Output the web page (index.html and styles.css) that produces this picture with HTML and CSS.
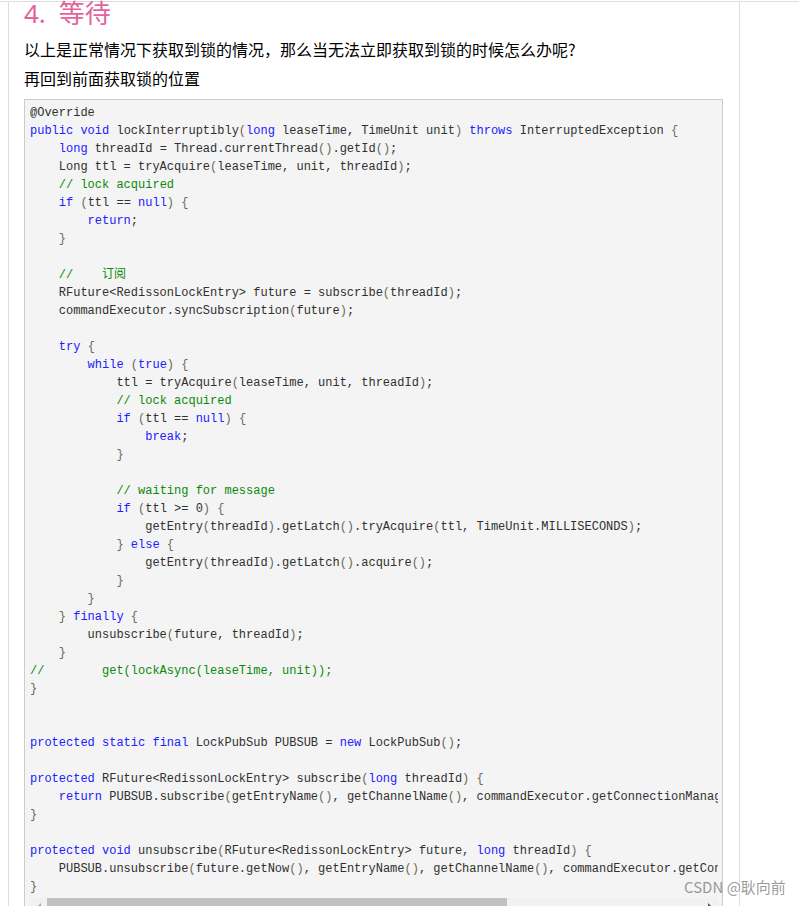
FILE: index.html
```html
<!DOCTYPE html>
<html>
<head>
    <title>4. 等待</title>
    <link rel="stylesheet" href="styles.css">
</head>
<body>
    <div class="page">
        <div class="article">
            <h2 class="title"><span class="title-num">4.</span>等待</h2>
            <p class="first">以上是正常情况下获取到锁的情况，那么当无法立即获取到锁的时候怎么办呢?</p>
            <p>再回到前面获取锁的位置</p>
            <div class="code-box">
<pre class="code"><span>@Override</span>
<span class="k">public</span> <span class="k">void</span> lockInterruptibly<span class="p">(</span><span class="k">long</span> leaseTime, TimeUnit unit<span class="p">)</span> <span class="k">throws</span> InterruptedException <span class="p">{</span>
    <span class="k">long</span> threadId = Thread.currentThread<span class="p">()</span>.getId<span class="p">()</span>;
    Long ttl = tryAcquire<span class="p">(</span>leaseTime, unit, threadId<span class="p">)</span>;
    <span class="c">// lock acquired</span>
    <span class="k">if</span> <span class="p">(</span>ttl == <span class="k">null</span><span class="p">)</span> <span class="p">{</span>
        <span class="k">return</span>;
    <span class="p">}</span>

    <span class="c">//    订阅</span>
    RFuture&lt;RedissonLockEntry&gt; future = subscribe<span class="p">(</span>threadId<span class="p">)</span>;
    commandExecutor.syncSubscription<span class="p">(</span>future<span class="p">)</span>;

    <span class="k">try</span> <span class="p">{</span>
        <span class="k">while</span> <span class="p">(</span><span class="k">true</span><span class="p">)</span> <span class="p">{</span>
            ttl = tryAcquire<span class="p">(</span>leaseTime, unit, threadId<span class="p">)</span>;
            <span class="c">// lock acquired</span>
            <span class="k">if</span> <span class="p">(</span>ttl == <span class="k">null</span><span class="p">)</span> <span class="p">{</span>
                <span class="k">break</span>;
            <span class="p">}</span>

            <span class="c">// waiting for message</span>
            <span class="k">if</span> <span class="p">(</span>ttl &gt;= 0<span class="p">)</span> <span class="p">{</span>
                getEntry<span class="p">(</span>threadId<span class="p">)</span>.getLatch<span class="p">()</span>.tryAcquire<span class="p">(</span>ttl, TimeUnit.MILLISECONDS<span class="p">)</span>;
            <span class="p">}</span> <span class="k">else</span> <span class="p">{</span>
                getEntry<span class="p">(</span>threadId<span class="p">)</span>.getLatch<span class="p">()</span>.acquire<span class="p">()</span>;
            <span class="p">}</span>
        <span class="p">}</span>
    <span class="p">}</span> <span class="k">finally</span> <span class="p">{</span>
        unsubscribe<span class="p">(</span>future, threadId<span class="p">)</span>;
    <span class="p">}</span>
<span class="c">//        get(lockAsync(leaseTime, unit));</span>
<span class="p">}</span>


<span class="k">protected</span> <span class="k">static</span> <span class="k">final</span> LockPubSub PUBSUB = <span class="k">new</span> LockPubSub<span class="p">()</span>;

<span class="k">protected</span> RFuture&lt;RedissonLockEntry&gt; subscribe<span class="p">(</span><span class="k">long</span> threadId<span class="p">)</span> <span class="p">{</span>
    <span class="k">return</span> PUBSUB.subscribe<span class="p">(</span>getEntryName<span class="p">()</span>, getChannelName<span class="p">()</span>, commandExecutor.getConnectionManager<span class="p">())</span>;
<span class="p">}</span>

<span class="k">protected</span> <span class="k">void</span> unsubscribe<span class="p">(</span>RFuture&lt;RedissonLockEntry&gt; future, <span class="k">long</span> threadId<span class="p">)</span> <span class="p">{</span>
    PUBSUB.unsubscribe<span class="p">(</span>future.getNow<span class="p">()</span>, getEntryName<span class="p">()</span>, getChannelName<span class="p">()</span>, commandExecutor.getConnectionManager<span class="p">())</span>;
<span class="p">}</span></pre>
                <div class="hscroll">
                    <div class="hscroll-btn left"><span class="arrow-left"></span></div>
                    <div class="hscroll-track"><div class="hscroll-thumb"></div></div>
                    <div class="hscroll-btn right"><span class="arrow-right"></span></div>
                </div>
            </div>
            <p class="after">这里会订阅锁释放的消息，然后在循环中等待。</p>
        </div>
    </div>
    <div class="watermark">CSDN @耿向前</div>
</body>
</html>
```

FILE: styles.css
```css
body {
    margin: 0;
    background-color: #fff;
    color: #000;
    font-family: "Noto Sans CJK SC", "Noto Sans", sans-serif;
}
.page {
    margin-top: 1px;
    border-top: 1px solid #ddd;
}
.article {
    box-sizing: border-box;
    width: 732px;
    margin-left: 8px;
    padding: 0 16px 40px 15px;
    border-left: 1px solid #ddd;
    border-right: 1px solid #ddd;
}
.title {
    margin: 0;
    font-size: 26px;
    line-height: 20px;
    font-weight: normal;
    color: #e3639c;
}
.title-num {
    display: inline-block;
    margin-right: 13px;
    font-family: "Noto Sans", sans-serif;
}
p {
    margin: 3px 0 0;
    font-size: 16px;
    line-height: 26px;
}
p.first {
    margin-top: 13px;
}
.code-box {
    margin-top: 8px;
    padding: 4px 4px 0 5px;
    border: 1px solid #ccc;
    background-color: #f4f4f4;
}
.code {
    margin: 0;
    overflow: hidden;
    font-family: "Liberation Mono", "Noto Sans CJK SC", monospace;
    font-size: 12px;
    line-height: 18px;
    color: #303030;
}
.k {
    color: #2020ff;
}
.c {
    color: #0a8a0a;
}
.p {
    color: #6d6a55;
}
.hscroll {
    display: flex;
    height: 17px;
    margin-top: 2px;
    background-color: #f1f1f1;
}
.hscroll-btn {
    display: flex;
    align-items: center;
    justify-content: center;
    width: 17px;
}
.hscroll-track {
    flex: 1;
}
.hscroll-thumb {
    width: 460px;
    height: 100%;
    background-color: #c1c1c1;
}
.arrow-left {
    border-top: 4px solid transparent;
    border-bottom: 4px solid transparent;
    border-right: 4px solid #a3a3a3;
}
.arrow-right {
    border-top: 4px solid transparent;
    border-bottom: 4px solid transparent;
    border-left: 4px solid #505050;
}
.watermark {
    position: absolute;
    left: 684px;
    top: 877px;
    font-size: 15px;
    line-height: 20px;
    color: rgba(120, 120, 120, 0.75);
}
.after {
    margin-top: 16px;
}
```
